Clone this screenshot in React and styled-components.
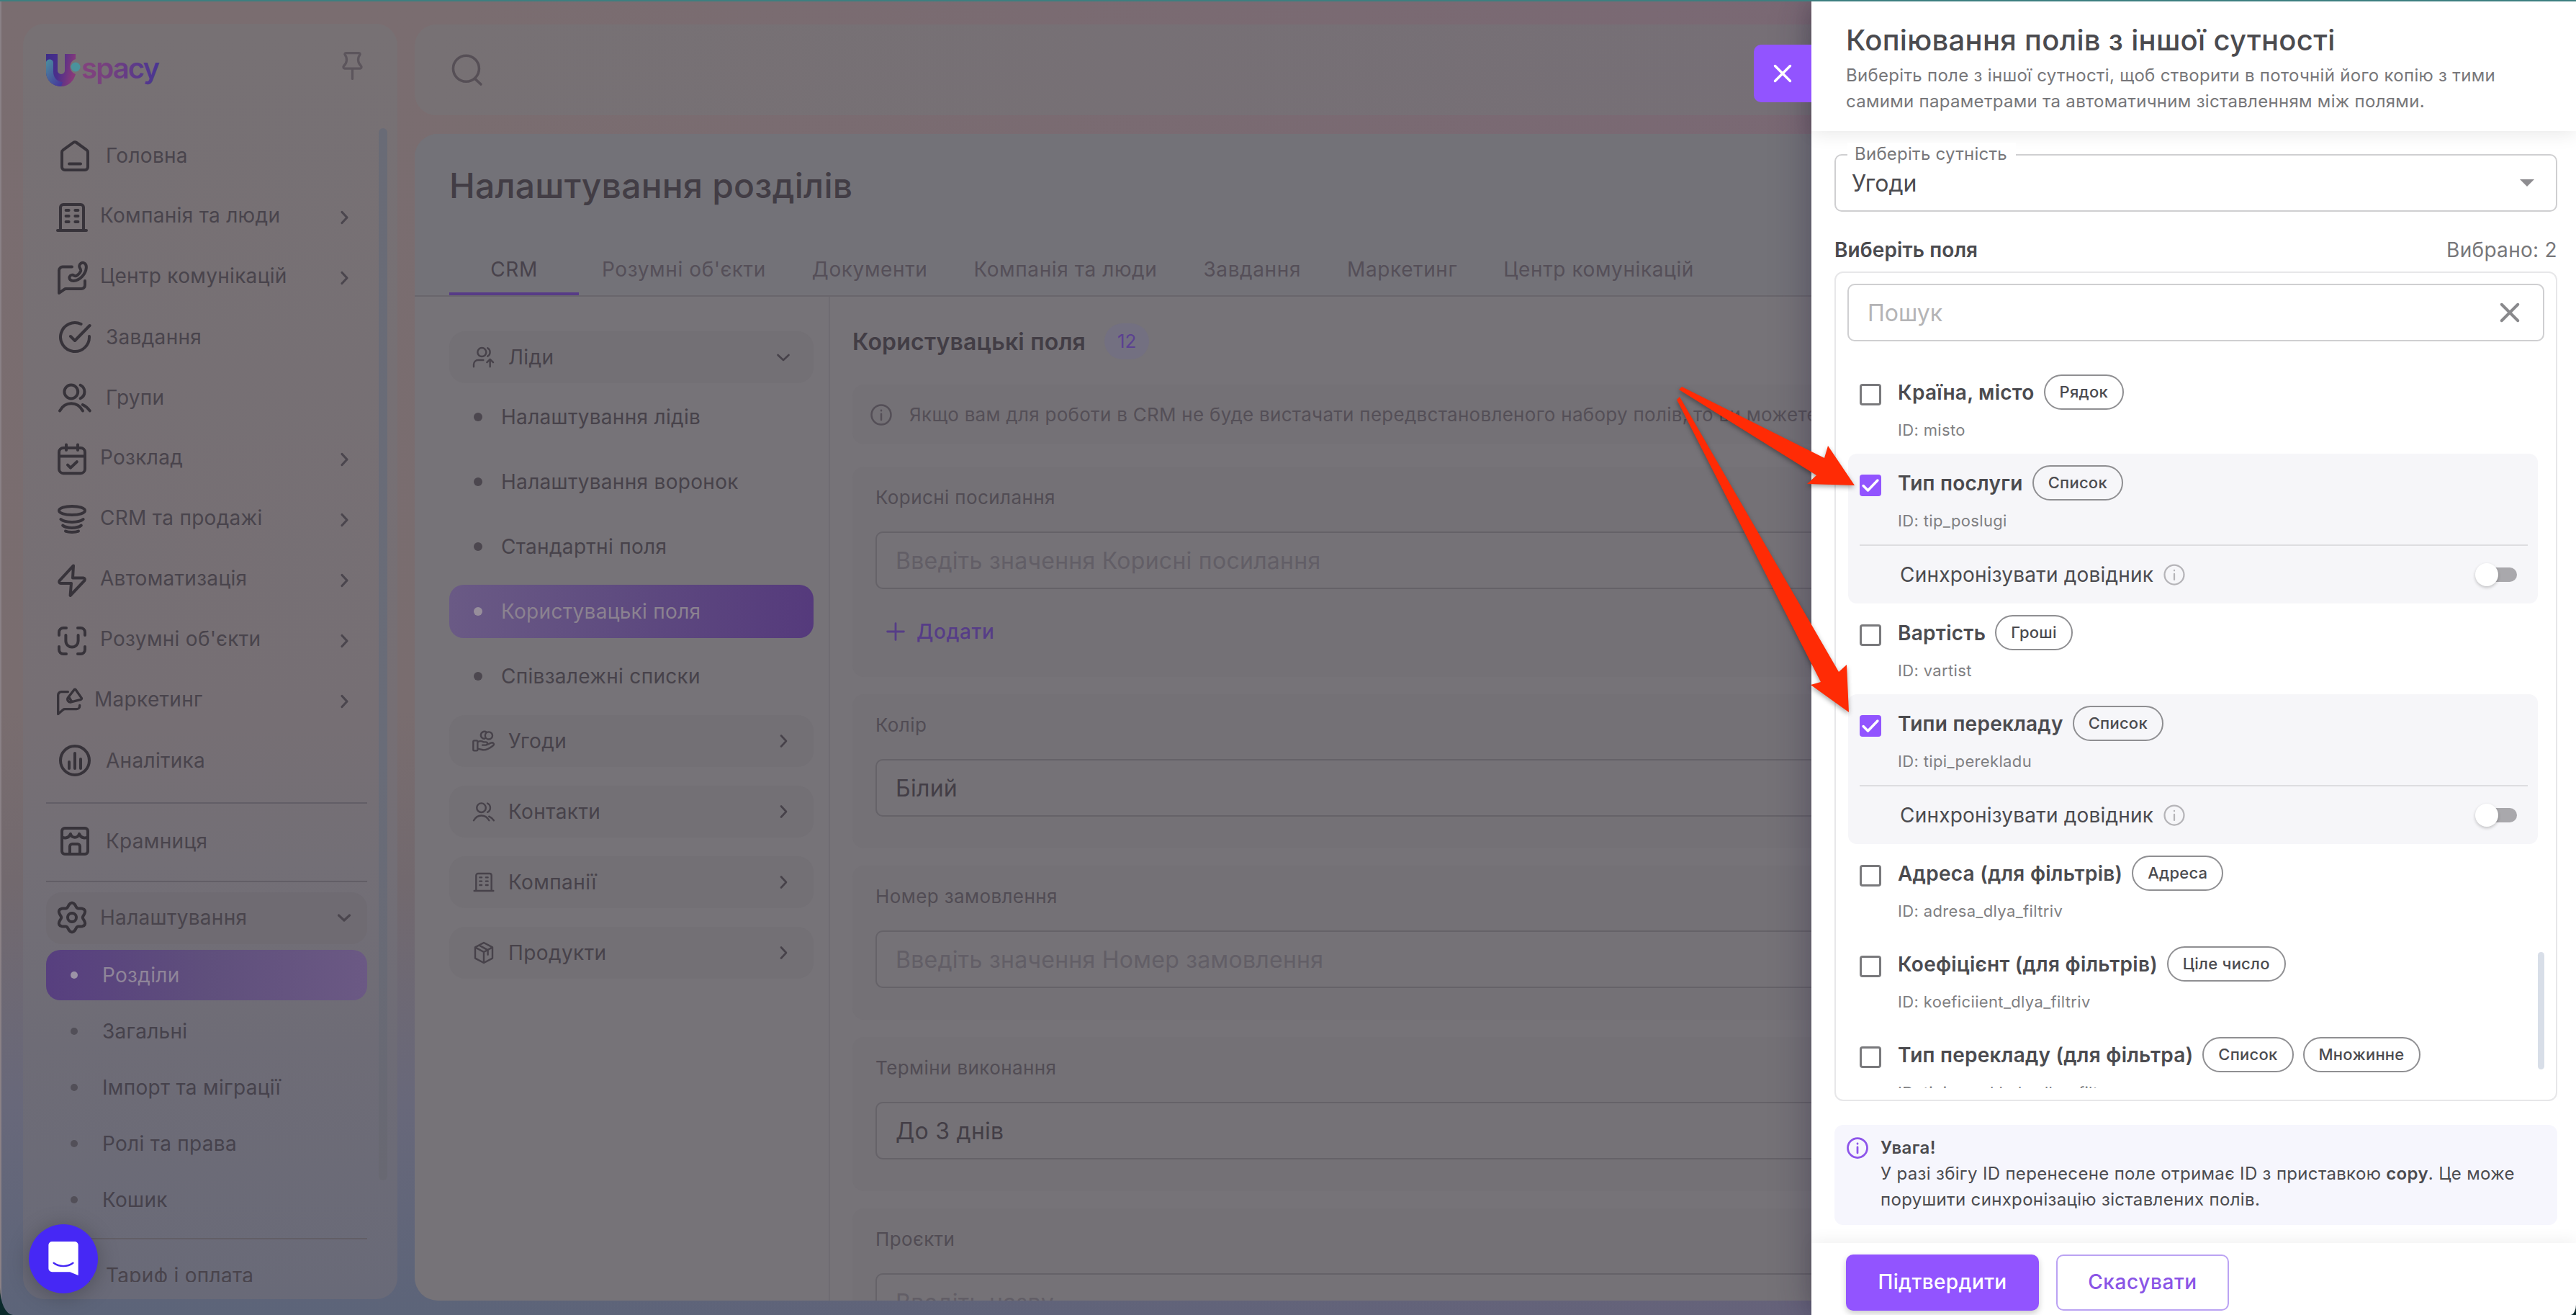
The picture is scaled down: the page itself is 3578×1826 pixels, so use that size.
import React from 'react'
import styled, { createGlobalStyle, css } from 'styled-components'

const GlobalStyle = createGlobalStyle`
  * {
    box-sizing: border-box;
  }

  body {
    margin: 0;
    background: #0b2a2c;
    font-family: Inter, "Liberation Sans", sans-serif;
    color: #4a454c;
    overflow: hidden;
  }
`

/* ---------- icons ---------- */

const gearPath = () => {
    const points = []
    for (let i = 0; i < 72; i++) {
        const a = (i * 5 * Math.PI) / 180
        const r = 8.8 - 1.4 * Math.cos(6 * a)
        points.push(`${(12 + r * Math.cos(a)).toFixed(2)} ${(12 + r * Math.sin(a)).toFixed(2)}`)
    }
    return `M${points.join('L')}z`
}

const icons = {
    home: 'M3 9.8c0-.7.3-1.3.9-1.7l7-5.1a1.9 1.9 0 0 1 2.2 0l7 5.1c.6.4.9 1 .9 1.7V20a2 2 0 0 1-2 2H5a2 2 0 0 1-2-2zM8 17.7h8',
    company: 'M2 21h20M4 21V5a2 2 0 0 1 2-2h12a2 2 0 0 1 2 2v16M7.8 7h2M14.2 7h2M7.8 11h2M14.2 11h2M7.8 15h2M14.2 15h2',
    comm: 'M12 4.3H5.5A2.5 2.5 0 0 0 3 6.8v15.7l3.6-2.6c.4-.3.8-.4 1.2-.4h10.7a2.5 2.5 0 0 0 2.5-2.5v-3M18.2 1.8c1.8-1.2 4 .3 3.7 3.2-.4 4.3-4.3 8.6-8.6 9-2.2.2-3.6-1.4-2.9-3 .6-1.3 2.2-1.3 3-.7.8.6 1.4.5 2.3-.2 1.2-1 2.2-2.2 2.4-3.2.1-.7-.2-1.2-.7-2-.6-1-.2-2.4.8-3.1z',
    task: 'M16.3 3A10 10 0 1 0 22 11.5M9 11.5l3 3L22.3 4',
    users: 'M14.1 8a4.7 4.7 0 1 1-9.4 0 4.7 4.7 0 0 1 9.4 0zM15.8 3.4c3.9 1.9 3.9 7.3 0 9.2M1.5 21.2c3.8-6.7 12.2-6.7 16 0M17.4 17c1.8.8 3.6 2.3 5 4.2',
    calendar: 'M3 7a3 3 0 0 1 3-3h12a3 3 0 0 1 3 3v11.6a3 3 0 0 1-3 3H6a3 3 0 0 1-3-3zM3 9.8h18M8 1.8V5.5M16 1.8V5.5M9 15.8l2 2 4.4-4.2',
    funnel: 'M21 5.5c0 1.7-4 3-9 3s-9-1.3-9-3 4-3 9-3 9 1.300 9 3zM4.2 11.500c3 2.600 12.600 2.600 15.600 0M5.600 15.800c2.600 2.200 10.200 2.200 12.800 0M7.500 19.800c2.300.9 6.700.9 9 0',
    bolt: 'M13 1.7 3.3 12.2a1.1 1.1 0 0 0 .8 1.8h7.400l-.7 8.500 9.900-10.400a1.100 1.100 0 0 0-.8-1.800h-7.400z',
    smart: 'M3 8V6a3 3 0 0 1 3-3h2M16 3h2a3 3 0 0 1 3 3v2M21 16v2a3 3 0 0 1-3 3h-2M8 21H6a3 3 0 0 1-3-3v-2M7.7 8v4a4.3 4.3 0 0 0 8.6 0V8',
    marketing: 'M11 4H5.5A2.7 2.7 0 0 0 2.8 6.7v15.8l4.2-3.6c.4-.4.9-.5 1.4-.5h9.7a2.7 2.7 0 0 0 2.7-2.7v-.4M16.2 2.200a.8.8 0 0 1 1.300 0l4.800 6.900a.8.8 0 0 1-.5 1.300l-8.200 2.100c-2.500.5-3.700-2-2.400-3.800zM12 8.600l2.200 3.600',
    chart: 'M22 12a10 10 0 1 1-20 0 10 10 0 0 1 20 0zM8 13v4.5M12 7v10.5M16 11v6.5',
    store: 'M5 3h14a2 2 0 0 1 2 2v14a2 2 0 0 1-2 2H5a2 2 0 0 1-2-2V5a2 2 0 0 1 2-2zM3 8.8c1.2 1.6 5 1.2 6-1.8 1 3.2 5 3.2 6 0 1 3 4.8 3.4 6 1.8M8.5 21v-5.3A1.7 1.7 0 0 1 10.2 14h3.600a1.700 1.700 0 0 1 1.700 1.700V21',
    gear: gearPath() + 'M15 12a3 3 0 1 1-6 0 3 3 0 0 1 6 0z',
    chevronRight: 'M9 4.5l7 7.5-7 7.5',
    chevronDown: 'M4.5 9l7.5 7 7.5-7',
    search: 'M20.5 10.8a9.6 9.6 0 1 1-19.2 0 9.6 9.6 0 0 1 19.2 0zM17.3 18.2l4.5 4.2',
    pin: 'M7 2h10a.9.9 0 0 1 .7 1.5c-2 2.5-1.5 6.2.9 8.5.8.8.4 2-.6 2H6c-1 0-1.400-1.200-.6-2 2.400-2.300 2.900-6 .9-8.500A.9.9 0 0 1 7 2zM12 14.500V22',
    info: 'M22.8 12a10.8 10.8 0 1 1-21.6 0 10.8 10.8 0 0 1 21.6 0zM12 11v6.5M12 7v.4',
    close: 'M3 3l18 18M21 3L3 21',
    plus: 'M12 1.5v21M1.5 12h21',
    lead: 'M14.5 6.8a4.5 4.5 0 1 1-9 0 4.5 4.5 0 0 1 9 0zM16 2.5c3.3 1.7 3.3 6.7 0 8.5M1.5 22v-2.5a4.5 4.5 0 0 1 4.5-4.5h5.5M18.5 22v-7.5M15.3 17.4l3.200-3.200 3.200 3.200',
    hand: 'M2 11.5h2.5a1 1 0 0 1 1 1V21a1 1 0 0 1-1 1H2a1 1 0 0 1-1-1v-8.500a1 1 0 0 1 1-1zM5.500 13c2.200-1.200 4.500-1 6 0h2.300c2.600 0 2.600 3.200 0 3.200H10.500M14.500 16l5-2c2.500-.9 4 1.300 2 2.900-5 4-8.500 5.100-11.500 4.100l-4.500-1M13 9.500a3.700 3.700 0 1 1 2-6.500M21 6.300a3.800 3.800 0 1 1-7.600 0 3.800 3.800 0 0 1 7.600 0z',
    box: 'M12 1.5l9 4.8v11.4l-9 4.8-9-4.8V6.3zM3.3 6.5L12 11.3l8.7-4.8M12 11.5v10.8M7.2 4.2l8.8 4.9M16.2 14V9',
    check: 'M3.5 12.5l5.5 5.5L20.5 6'
}

const Svg = styled.svg`
  flex: none;
  display: block;
  width: ${p => p.$size}px;
  height: ${p => p.$size}px;
  margin-top: ${p => p.$drop || 0}px;
  fill: none;
  stroke: ${p => p.$color || 'currentColor'};
  stroke-width: ${p => p.$weight || 2};
  stroke-linecap: round;
  stroke-linejoin: round;
`

const Icon = ({ name, size, weight, color, drop }) => (
    <Svg viewBox="0 0 24 24" $size={size} $weight={weight} $color={color} $drop={drop}>
        <path d={icons[name]} />
    </Svg>
)

/* ---------- page frame ---------- */

const Page = styled.div`
  position: relative;
  width: 3578px;
  height: 1826px;
  border-top: 2px solid #3d7f80;
  overflow: hidden;
`

const Frame = styled.div`
  display: flex;
  height: 1824px;
  border-radius: 0 0 8px 18px / 0 0 14px 38px;
  overflow: hidden;
`

const Workspace = styled.div`
  display: flex;
  flex: none;
  width: 2516px;
  padding: 31px 0 0 30px;
  border-left: 2px solid #8a8186;
  overflow: hidden;
  background:
    linear-gradient(90deg, transparent 25%, rgba(122, 94, 124, 0.3) 100%),
    linear-gradient(180deg, #7a6d70 0%, #796d6f 54%, #72696e 67%, #68687a 84%, #5c6479 100%);
`

/* ---------- sidebar ---------- */

const Sidebar = styled.aside`
  flex: none;
  width: 520px;
  height: 1771px;
  padding-left: 32px;
  border-radius: 30px;
  background: linear-gradient(180deg, #777174 0%, #766f74 55%, #736f76 66%, #6e6c76 80%, #696a78 100%);
`

const SidebarHead = styled.div`
  display: flex;
  justify-content: space-between;
  height: 141px;
  padding: 40px 41px 0 0;
  color: #5c555c;
`

const Logo = styled.svg`
  width: 164px;
  height: 50px;
  overflow: visible;
`

const NavViewport = styled.div`
  display: flex;
  gap: 16px;
  height: 1606px;
  overflow: hidden;
`

const NavList = styled.nav`
  flex: none;
  width: 446px;
`

const NavScroll = styled.div`
  width: 12px;
  height: 1461px;
  margin-top: 4px;
  border-radius: 6px;
  background: linear-gradient(180deg, #696b76 0%, #696c78 60%, #686872 100%);
`

const NavItem = styled.div`
  display: flex;
  align-items: center;
  height: ${p => (p.$open ? 72 : 84)}px;
  padding: 0 20px 0 ${p => (p.$leaf ? 16 : 12)}px;
  border-radius: 22px;
  color: #37333a;
  ${p => p.$open && 'background: #6f6b72;'}
`

const NavLabel = styled.span`
  flex: 1;
  margin: 0 0 ${p => (p.$leaf ? 0 : 3)}px ${p => (p.$leaf ? 19 : 15)}px;
  font-size: 28px;
  letter-spacing: 0.3px;
  white-space: nowrap;
  color: #49444c;
`

const NavRule = styled.div`
  height: 2px;
  margin: ${p => p.$top}px 0 ${p => p.$bottom}px;
  background: #625e66;
`

const NavSub = styled.div`
  display: flex;
  align-items: center;
  gap: 34px;
  height: 70px;
  margin-top: 8px;
  padding-left: 34px;
  border-radius: 20px;
  font-size: 28px;
  letter-spacing: 0.3px;
  color: #46424c;
  ${p => p.$active && css`
    color: #8f8599;
    background: linear-gradient(90deg, #573f7f 0%, #5f4f7c 50%, #6b5984 100%);
  `}

  i {
    width: 10px;
    height: 10px;
    border-radius: 50%;
    background: ${p => (p.$active ? '#9c93a6' : '#524f58')};
  }
`

/* ---------- settings page ---------- */

const Main = styled.main`
  flex: none;
  display: flex;
  flex-direction: column;
  gap: 26px;
  width: 1964px;
  margin: 1px 0 0 24px;
`

const TopBar = styled.header`
  display: flex;
  align-items: center;
  height: 126px;
  padding-left: 51px;
  border-radius: 30px 0 0 30px;
  color: #564f56;
  background: linear-gradient(90deg, #777174, #766f76);
`

const Panel = styled.section`
  height: 1620px;
  border-radius: 32px 0 0 32px;
  background: #767378;
  overflow: hidden;
`

const PanelHead = styled.div`
  height: 226px;
  padding: 44px 0 0 48px;
  border-bottom: 2px solid #69666c;
  background: #737278;
`

const Title = styled.h1`
  margin: 0 0 52px;
  font-size: 48px;
  line-height: 56px;
  font-weight: 500;
  letter-spacing: 0.25px;
  color: #423d45;
`

const Tabs = styled.div`
  display: flex;
`

const Tab = styled.div`
  min-width: ${p => (p.$active ? 180 : 0)}px;
  height: 72px;
  padding: 0 32px;
  font-size: 28px;
  line-height: 72px;
  letter-spacing: 0.6px;
  text-align: center;
  white-space: nowrap;
  color: #554f58;
  ${p => p.$active && css`
    border-bottom: 4px solid #573b87;
    color: #48424b;
  `}
`

const PanelBody = styled.div`
  display: flex;
  height: 1394px;
`

const Sections = styled.div`
  flex: none;
  width: 575px;
  padding: 48px 21px 0 48px;
`

const SectionItem = styled.div`
  display: flex;
  align-items: center;
  gap: 18px;
  height: 72px;
  margin-bottom: ${p => (p.$open ? 10 : 26)}px;
  padding: 0 30px 0 32px;
  border-radius: 22px;
  font-size: 28px;
  letter-spacing: 0.4px;
  color: #47424a;
  background: #737075;

  span {
    flex: 1;
  }
`

const SectionSub = styled.div`
  display: flex;
  align-items: center;
  gap: 26px;
  height: 74px;
  margin-bottom: ${p => (p.$last ? 17 : 16)}px;
  padding-left: 34px;
  border-radius: 20px;
  font-size: 28px;
  letter-spacing: 0.3px;
  color: #47424a;
  ${p => p.$active && css`
    color: #8b8290;
    background: linear-gradient(90deg, #6a5a85 0%, #5f4c80 45%, #553a7c 100%);
  `}

  i {
    width: 12px;
    height: 12px;
    border-radius: 50%;
    background: ${p => (p.$active ? '#978e9b' : '#4c474f')};
  }
`

const Fields = styled.div`
  flex: 1;
  min-width: 0;
  padding: 37px 0 0 31px;
  border-left: 2px solid #6f6c72;
`

const FieldsHead = styled.div`
  display: flex;
  align-items: center;
  gap: 26px;
  height: 50px;
  margin-bottom: 35px;

  h2 {
    margin: 0;
    font-size: 32px;
    font-weight: 600;
    letter-spacing: 0.2px;
    color: #423d45;
  }
`

const Count = styled.div`
  padding: 0 18px;
  border-radius: 25px;
  font-size: 26px;
  line-height: 50px;
  color: #5b4191;
  background: #737081;
`

const Hint = styled.div`
  display: flex;
  align-items: center;
  gap: 24px;
  height: 83px;
  margin-bottom: 31px;
  padding-left: 25px;
  border-radius: 16px 0 0 16px;
  font-size: 26px;
  letter-spacing: 0.28px;
  white-space: nowrap;
  color: #544f57;
  background: #747176;
`

const Card = styled.div`
  height: ${p => (p.$tall ? 292 : 214)}px;
  margin-bottom: 24px;
  padding: 25px 0 0 32px;
  border-radius: 16px 0 0 16px;
  background: #747176;
`

const CardLabel = styled.div`
  margin-bottom: 29px;
  font-size: 26px;
  line-height: 36px;
  letter-spacing: 0.4px;
  color: #514c54;
`

const Field = styled.div`
  display: flex;
  align-items: center;
  height: 80px;
  padding-left: 26px;
  border: 2px solid #656268;
  border-right: 0;
  border-radius: 10px 0 0 10px;
  font-size: 32px;
  letter-spacing: 0.27px;
  white-space: nowrap;
  color: ${p => (p.$empty ? '#625e66' : '#433e46')};
  background: #757277;
`

const Multiple = styled.em`
  margin: 0 -140px 0 auto;
  font-size: 28px;
  color: #4c4750;
`

const AddButton = styled.div`
  display: flex;
  align-items: center;
  gap: 16px;
  height: 60px;
  margin-top: 29px;
  padding-left: 15px;
  font-size: 28px;
  font-weight: 500;
  letter-spacing: 0.6px;
  color: #563d87;
`

/* ---------- drawer ---------- */

const Drawer = styled.section`
  position: relative;
  display: flex;
  flex-direction: column;
  flex: none;
  width: 1062px;
  color: #4b4b4f;
  background: #fff;
  box-shadow: 0 0 50px rgba(35, 28, 60, 0.42);
`

const CloseTab = styled.button`
  position: absolute;
  top: 60px;
  left: -80px;
  display: flex;
  align-items: center;
  justify-content: center;
  width: 80px;
  height: 80px;
  padding: 0;
  border: 0;
  border-radius: 10px 0 0 10px;
  color: #fff;
  background: #9254ff;
`

const DrawerHead = styled.div`
  height: 180px;
  padding: 27px 48px 0;
  box-shadow: 0 4px 24px rgba(0, 0, 0, 0.09);

  h2 {
    margin: 0 0 4px;
    font-size: 40px;
    line-height: 54px;
    font-weight: 500;
    letter-spacing: 0.3px;
  }

  p {
    margin: 0;
    font-size: 24px;
    line-height: 36px;
    letter-spacing: 0.3px;
    white-space: nowrap;
    color: #77777a;
  }
`

const DrawerBody = styled.div`
  flex: 1;
  padding: 32px 26px 0 32px;
`

const Select = styled.div`
  position: relative;
  display: flex;
  align-items: center;
  justify-content: space-between;
  height: 80px;
  padding: 0 30px 0 22px;
  border: 2px solid #cfcfd1;
  border-radius: 10px;
  font-size: 32px;

  label {
    position: absolute;
    top: -18px;
    left: 16px;
    padding: 0 12px 0 10px;
    font-size: 24px;
    line-height: 32px;
    letter-spacing: 0.25px;
    color: #77777a;
    background: #fff;
  }
`

const Caret = styled.span`
  border: 10px solid transparent;
  border-top-color: #8d8c90;
  border-bottom: 0;
`

const ListCaption = styled.div`
  display: flex;
  justify-content: space-between;
  margin-top: 33px;
  font-size: 28px;
  line-height: 40px;
  letter-spacing: 0.3px;
  color: #77777a;

  b {
    font-weight: 600;
    letter-spacing: 0.1px;
    color: #4b4b4f;
  }
`

const ListBox = styled.div`
  height: 1152px;
  margin-top: 10px;
  padding: 15px 16px 0;
  border: 2px solid #e7e7e9;
  border-radius: 12px;
`

const SearchField = styled.div`
  display: flex;
  align-items: center;
  justify-content: space-between;
  height: 80px;
  padding: 0 31px 0 26px;
  border: 2px solid #cfcfd1;
  border-radius: 10px;
  font-size: 32px;
  color: #b4b4b6;
`

const ListViewport = styled.div`
  display: flex;
  height: 1007px;
  margin-top: 30px;
  overflow: hidden;
`

const Rows = styled.div`
  width: 958px;
  margin-left: 1px;
`

const ListScroll = styled.div`
  width: 9px;
  height: 163px;
  margin-top: 818px;
  border-radius: 5px;
  background: #d8dee8;
`

const Row = styled.div`
  height: ${p => (p.$checked ? 208 : 126)}px;
  padding: 0 14px 0 16px;
  border-radius: 12px;
  background: ${p => (p.$checked ? '#f6f6f9' : 'transparent')};
`

const RowTop = styled.div`
  display: flex;
  gap: 23px;
  height: 126px;
`

const Checkbox = styled.span`
  display: flex;
  align-items: center;
  justify-content: center;
  flex: none;
  width: 30px;
  height: 30px;
  margin-top: 29px;
  border: ${p => (p.$checked ? 0 : '3px solid #79797c')};
  border-radius: 4px;
  color: #fff;
  background: ${p => (p.$checked ? '#9254ff' : '#fff')};
`

const RowName = styled.div`
  display: flex;
  align-items: center;
  gap: 13px;
  height: 49px;
  margin: 16px 0 12px;
  font-size: 28px;
  font-weight: 600;
  letter-spacing: 0.25px;
  white-space: nowrap;
`

const Chip = styled.span`
  height: 49px;
  padding: 0 20px;
  border: 2px solid #8f8f92;
  border-radius: 25px;
  font-size: 22px;
  line-height: 44px;
  font-weight: 500;
`

const RowId = styled.div`
  font-size: 22px;
  line-height: 32px;
  letter-spacing: 0.35px;
  color: #7f7f82;
`

const SyncRow = styled.div`
  display: flex;
  align-items: center;
  height: 81px;
  padding: 0 15px 0 56px;
  border-top: 2px solid #dddde0;
  font-size: 28px;
  letter-spacing: 0.2px;

  svg {
    margin-left: 14px;
  }
`

const Switch = styled.span`
  position: relative;
  width: 52px;
  height: 20px;
  margin-left: auto;
  border-radius: 10px;
  background: #a9a8ac;

  &::before {
    content: '';
    position: absolute;
    left: -6px;
    top: -6px;
    width: 32px;
    height: 32px;
    border-radius: 50%;
    background: #fff;
    box-shadow: 0 2px 4px rgba(0, 0, 0, 0.22);
  }
`

const Notice = styled.div`
  display: flex;
  gap: 17px;
  height: 139px;
  margin-top: 33px;
  padding: 14px 0 0 17px;
  border-radius: 12px;
  font-size: 24px;
  line-height: 36px;
  letter-spacing: 0.33px;
  white-space: nowrap;
  background: #f6f6fd;

  b {
    font-weight: 600;
  }
`

const DrawerFoot = styled.div`
  display: flex;
  gap: 24px;
  height: 100px;
  padding: 16px 0 0 48px;
  box-shadow: 0 -4px 20px rgba(0, 0, 0, 0.06);
`

const Button = styled.button`
  width: ${p => (p.$primary ? 268 : 240)}px;
  height: 78px;
  padding: 0 0 2px;
  border: ${p => (p.$primary ? 0 : '2px solid #bba3f3')};
  border-radius: 10px;
  font-family: inherit;
  font-size: 28px;
  font-weight: 500;
  letter-spacing: ${p => (p.$primary ? 0.4 : 0.6)}px;
  color: ${p => (p.$primary ? '#fff' : '#8a55e6')};
  background: ${p => (p.$primary ? '#9254ff' : '#fff')};
  box-shadow: ${p => (p.$primary ? '0 4px 8px rgba(0, 0, 0, 0.2)' : 'none')};
`

/* ---------- things above the page ---------- */

const ChatButton = styled.div`
  position: absolute;
  left: 40px;
  top: 1698px;
  display: flex;
  align-items: center;
  justify-content: center;
  width: 96px;
  height: 96px;
  border-radius: 50%;
  background: #4628f5;
  box-shadow: 0 4px 30px rgba(0, 0, 0, 0.25);

  svg {
    width: 43px;
    height: 48px;
  }
`

const Arrows = styled.svg`
  position: absolute;
  left: 2300px;
  top: 498px;
  width: 300px;
  height: 520px;
  pointer-events: none;
  filter: drop-shadow(0 3px 3px rgba(0, 0, 0, 0.35));
`

/* ---------- data ---------- */

const menu = [
    { icon: 'home', text: 'Головна', leaf: true },
    { icon: 'company', text: 'Компанія та люди' },
    { icon: 'comm', text: 'Центр комунікацій' },
    { icon: 'task', text: 'Завдання', leaf: true },
    { icon: 'users', text: 'Групи', leaf: true },
    { icon: 'calendar', text: 'Розклад' },
    { icon: 'funnel', text: 'CRM та продажі' },
    { icon: 'bolt', text: 'Автоматизація' },
    { icon: 'smart', text: "Розумні об'єкти" },
    { icon: 'marketing', text: 'Маркетинг', size: 40 },
    { icon: 'chart', text: 'Аналітика', leaf: true }
]

const subMenu = ['Розділи', 'Загальні', 'Імпорт та міграції', 'Ролі та права', 'Кошик']

const tabs = ['CRM', "Розумні об'єкти", 'Документи', 'Компанія та люди', 'Завдання', 'Маркетинг', 'Центр комунікацій']

const leadPages = ['Налаштування лідів', 'Налаштування воронок', 'Стандартні поля', 'Користувацькі поля', 'Співзалежні списки']

const sections = [
    { icon: 'hand', text: 'Угоди' },
    { icon: 'users', text: 'Контакти' },
    { icon: 'company', text: 'Компанії' },
    { icon: 'box', text: 'Продукти' }
]

const cards = [
    { label: 'Колір', value: 'Білий' },
    { label: 'Номер замовлення', value: 'Введіть значення Номер замовлення', empty: true },
    { label: 'Терміни виконання', value: 'До 3 днів' },
    { label: 'Проєкти', value: 'Введіть назву', empty: true }
]

const rows = [
    { name: 'Країна, місто', id: 'misto', chips: ['Рядок'] },
    { name: 'Тип послуги', id: 'tip_poslugi', chips: ['Список'], checked: true },
    { name: 'Вартість', id: 'vartist', chips: ['Гроші'] },
    { name: 'Типи перекладу', id: 'tipi_perekladu', chips: ['Список'], checked: true },
    { name: 'Адреса (для фільтрів)', id: 'adresa_dlya_filtriv', chips: ['Адреса'] },
    { name: 'Коефіцієнт (для фільтрів)', id: 'koeficiient_dlya_filtriv', chips: ['Ціле число'] },
    { name: 'Тип перекладу (для фільтра)', id: 'tipi_perekladu_dlya_filtra', chips: ['Список', 'Множинне'] }
]

/* ---------- parts ---------- */

const UspacyLogo = () => (
    <Logo viewBox="0 0 164 50">
        <defs>
            <linearGradient id="word" x1="0" x2="1">
                <stop offset="0" stopColor="#84427e" />
                <stop offset="0.35" stopColor="#74407f" />
                <stop offset="1" stopColor="#483593" />
            </linearGradient>
            <linearGradient id="mark" x1="0" y1="0" x2="1" y2="0.2">
                <stop offset="0" stopColor="#3c2c88" />
                <stop offset="0.5" stopColor="#4c2f8c" />
                <stop offset="1" stopColor="#86397a" />
            </linearGradient>
            <linearGradient id="swoosh" x1="0" y1="0" x2="0.8" y2="1">
                <stop offset="0" stopColor="#4a8f9e" />
                <stop offset="1" stopColor="#46389a" />
            </linearGradient>
        </defs>
        <path d="M0 2H16V25a5 5 0 0 0 10 0V2H41V9a11 11 0 0 0 0 21C38 40 31 47 21 47 9 47 0 38 0 27z" fill="url(#mark)" />
        <path d="M0 14c0-6 10-6 10 0v12c0 9 5 14 13 15l-2 6C9 47 0 38 0 27z" fill="url(#swoosh)" />
        <circle cx="41" cy="20" r="6.5" fill="#4a939c" />
        <text x="49" y="36" textLength="109" fontFamily="Inter, sans-serif" fontSize="40" fontWeight="600" fill="url(#word)">spacy</text>
    </Logo>
)

const MenuItem = ({ item, open }) => (
    <NavItem $leaf={item.leaf} $open={open}>
        <Icon name={item.icon} size={item.size || 48} drop={item.leaf ? 0 : open ? -2 : 3} />
        <NavLabel $leaf={item.leaf}>{item.text}</NavLabel>
        {!item.leaf && (
            <Icon name={open ? 'chevronDown' : 'chevronRight'} size={24} weight={3.2} color="#4b464e" drop={open ? -2 : 3} />
        )}
    </NavItem>
)

const FieldRow = ({ row }) => (
    <Row $checked={row.checked}>
        <RowTop>
            <Checkbox $checked={row.checked}>
                {row.checked && <Icon name="check" size={28} weight={3} />}
            </Checkbox>
            <div>
                <RowName>
                    {row.name}
                    {row.chips.map(chip => <Chip key={chip}>{chip}</Chip>)}
                </RowName>
                <RowId>ID: {row.id}</RowId>
            </div>
        </RowTop>
        {row.checked && (
            <SyncRow>
                Синхронізувати довідник
                <Icon name="info" size={30} weight={1.8} color="#b5b4b8" />
                <Switch />
            </SyncRow>
        )}
    </Row>
)

const App = () => (
    <Page>
        <GlobalStyle />
        <Frame>
            <Workspace>
                <Sidebar>
                    <SidebarHead>
                        <UspacyLogo />
                        <Icon name="pin" size={43} weight={1.8} drop={-3} />
                    </SidebarHead>
                    <NavViewport>
                        <NavList>
                            {menu.map(item => <MenuItem key={item.text} item={item} />)}
                            <NavRule $top={16} $bottom={10} />
                            <MenuItem item={{ icon: 'store', text: 'Крамниця', leaf: true }} />
                            <NavRule $top={13} $bottom={14} />
                            <MenuItem item={{ icon: 'gear', text: 'Налаштування' }} open />
                            {subMenu.map((text, i) => (
                                <NavSub key={text} $active={i === 0}><i />{text}</NavSub>
                            ))}
                            <NavRule $top={18} $bottom={8} />
                            <MenuItem item={{ icon: 'chart', text: 'Тариф і оплата', leaf: true }} />
                        </NavList>
                        <NavScroll />
                    </NavViewport>
                </Sidebar>
                <Main>
                    <TopBar>
                        <Icon name="search" size={45} weight={1.9} />
                    </TopBar>
                    <Panel>
                        <PanelHead>
                            <Title>Налаштування розділів</Title>
                            <Tabs>
                                {tabs.map((text, i) => <Tab key={text} $active={i === 0}>{text}</Tab>)}
                            </Tabs>
                        </PanelHead>
                        <PanelBody>
                            <Sections>
                                <SectionItem $open>
                                    <Icon name="lead" size={32} weight={1.8} />
                                    <span>Ліди</span>
                                    <Icon name="chevronDown" size={24} weight={2.6} />
                                </SectionItem>
                                {leadPages.map((text, i) => (
                                    <SectionSub key={text} $active={i === 3} $last={i === 4}><i />{text}</SectionSub>
                                ))}
                                {sections.map(item => (
                                    <SectionItem key={item.text}>
                                        <Icon name={item.icon} size={32} weight={1.8} />
                                        <span>{item.text}</span>
                                        <Icon name="chevronRight" size={24} weight={2.6} />
                                    </SectionItem>
                                ))}
                            </Sections>
                            <Fields>
                                <FieldsHead>
                                    <h2>Користувацькі поля</h2>
                                    <Count>12</Count>
                                </FieldsHead>
                                <Hint>
                                    <Icon name="info" size={30} weight={2} />
                                    Якщо вам для роботи в CRM не буде вистачати передвстановленого набору полів, то ви можете
                                </Hint>
                                <Card $tall>
                                    <CardLabel>Корисні посилання</CardLabel>
                                    <Field $empty>
                                        Введіть значення Корисні посилання
                                        <Multiple>Множинне</Multiple>
                                    </Field>
                                    <AddButton>
                                        <Icon name="plus" size={26} weight={2.6} />
                                        Додати
                                    </AddButton>
                                </Card>
                                {cards.map(card => (
                                    <Card key={card.label}>
                                        <CardLabel>{card.label}</CardLabel>
                                        <Field $empty={card.empty}>{card.value}</Field>
                                    </Card>
                                ))}
                            </Fields>
                        </PanelBody>
                    </Panel>
                </Main>
            </Workspace>
            <Drawer>
                <CloseTab>
                    <Icon name="close" size={28} weight={3} />
                </CloseTab>
                <DrawerHead>
                    <h2>Копіювання полів з іншої сутності</h2>
                    <p>
                        Виберіть поле з іншої сутності, щоб створити в поточній його копію з тими<br />
                        самими параметрами та автоматичним зіставленням між полями.
                    </p>
                </DrawerHead>
                <DrawerBody>
                    <Select>
                        <label>Виберіть сутність</label>
                        Угоди
                        <Caret />
                    </Select>
                    <ListCaption>
                        <b>Виберіть поля</b>
                        <span>Вибрано: 2</span>
                    </ListCaption>
                    <ListBox>
                        <SearchField>
                            Пошук
                            <Icon name="close" size={30} weight={3.2} color="#89898c" />
                        </SearchField>
                        <ListViewport>
                            <Rows>
                                {rows.map(row => <FieldRow key={row.id} row={row} />)}
                            </Rows>
                            <ListScroll />
                        </ListViewport>
                    </ListBox>
                    <Notice>
                        <Icon name="info" size={30} weight={2.2} color="#8d55ea" drop={3} />
                        <div>
                            <b>Увага!</b><br />
                            У разі збігу ID перенесене поле отримає ID з приставкою <b>copy</b>. Це може<br />
                            порушити синхронізацію зіставлених полів.
                        </div>
                    </Notice>
                </DrawerBody>
                <DrawerFoot>
                    <Button $primary>Підтвердити</Button>
                    <Button>Скасувати</Button>
                </DrawerFoot>
            </Drawer>
        </Frame>
        <ChatButton>
            <svg viewBox="0 0 44 50">
                <path d="M5 0h33a5 5 0 0 1 5 5v44l-12-5H5a5 5 0 0 1-5-5V5a5 5 0 0 1 5-5z" fill="#fff" />
                <path d="M7.5 31c8 6 20 6 28 0" fill="none" stroke="#4628f5" strokeWidth="2.4" strokeLinecap="round" />
            </svg>
        </ChatButton>
        <Arrows viewBox="2300 500 300 520">
            <path d="M2332 541l4-4 198 99 5-17 37 55-66-2 13-12z" fill="#ff2b05" />
            <path d="M2329 555l4-4 221 382 11-10 3 66-53-38 14-4z" fill="#ff2b05" />
        </Arrows>
    </Page>
)

export default App
